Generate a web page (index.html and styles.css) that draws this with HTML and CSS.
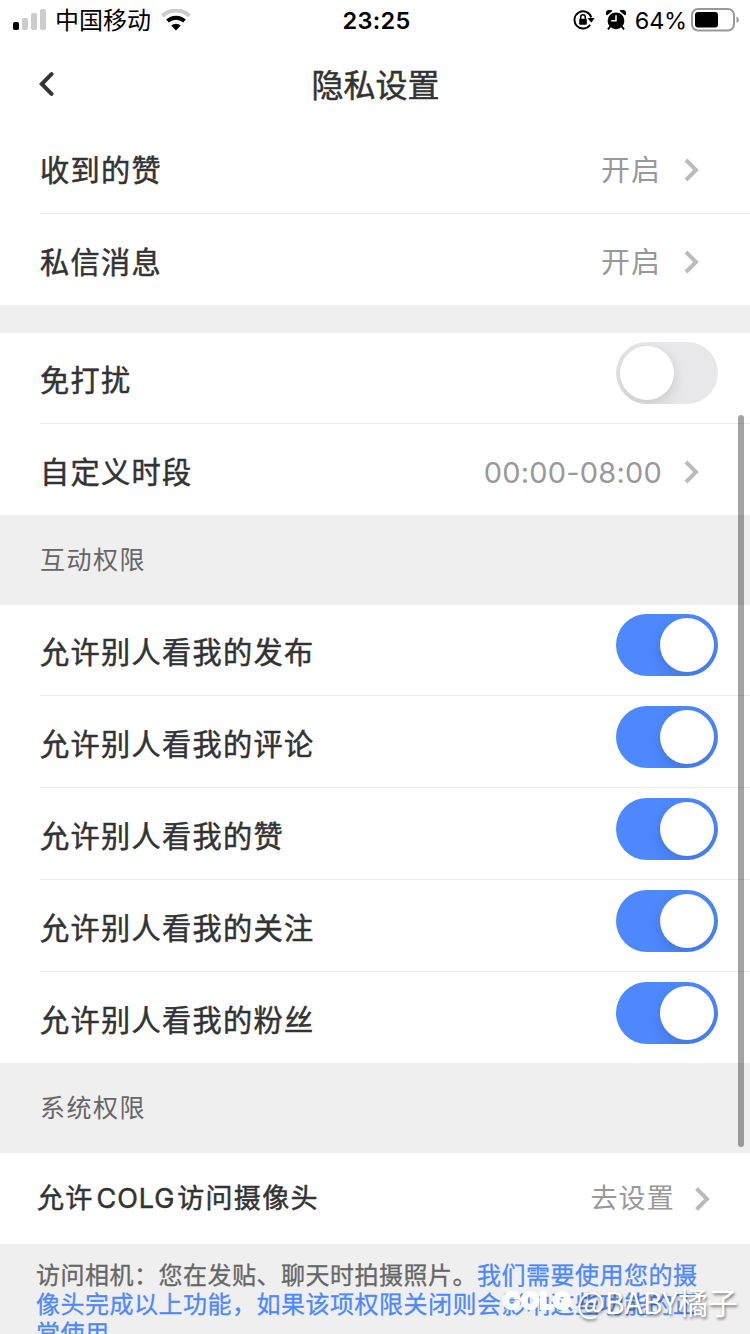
FILE: index.html
```html
<!DOCTYPE html>
<html lang="zh-CN">
<head>
    <meta charset="UTF-8">
    <meta name="viewport" content="width=device-width, initial-scale=1.0">
    <title>隐私设置</title>
    <link rel="stylesheet" href="styles.css">
</head>
<body>
    <div class="screen">
        <header class="status-bar">
            <div class="status-left">
                <svg class="signal" width="34" height="22" viewBox="0 0 34 22">
                    <rect x="0" y="13" width="6" height="8" rx="1.8" fill="#000"/>
                    <rect x="9" y="9" width="6" height="12" rx="1.8" fill="#ccc"/>
                    <rect x="18" y="4" width="6" height="17" rx="1.8" fill="#ccc"/>
                    <rect x="27" y="0" width="6" height="21" rx="1.8" fill="#ccc"/>
                </svg>
                <span class="carrier">中国移动</span>
                <svg class="wifi" width="30" height="22" viewBox="0 0 30 22">
                    <path d="M1.5 7 A19.5 19.5 0 0 1 28.5 7" fill="none" stroke="#ccc" stroke-width="4"/>
                    <path d="M6.5 12 A12.5 12.5 0 0 1 23.5 12" fill="none" stroke="#000" stroke-width="4"/>
                    <path d="M10.3 16.6 A6.8 6.8 0 0 1 19.7 16.6 L15 21.5 Z" fill="#000"/>
                </svg>
            </div>
            <span class="time">23:25</span>
            <div class="status-right">
                <svg class="lock" width="22" height="20" viewBox="0 0 22 20">
                    <path d="M17.2 14.8 A8.6 8.6 0 1 1 18.3 7.4" fill="none" stroke="#000" stroke-width="1.9"/>
                    <path d="M14.6 8 H21.6 L18.3 12.8 Z" fill="#000"/>
                    <rect x="6.2" y="8.8" width="7.6" height="6" rx="1" fill="#000"/>
                    <path d="M7.7 9 V7.2 A2.3 2.5 0 0 1 12.3 7.2 V9" fill="none" stroke="#000" stroke-width="1.5"/>
                </svg>
                <svg class="alarm" width="20" height="20" viewBox="0 0 20 20">
                    <circle cx="10" cy="10.8" r="8.4" fill="#000"/>
                    <path d="M0.8 5.6 A3.6 3.6 0 0 1 6.4 0.9 Z M13.6 0.9 A3.6 3.6 0 0 1 19.2 5.6 Z" fill="#000"/>
                    <path d="M4.2 16.5 L2 19.3 M15.8 16.5 L18 19.3" stroke="#000" stroke-width="2"/>
                    <path d="M10 5.2 V10.8 H5.2" fill="none" stroke="#fff" stroke-width="1.5"/>
                </svg>
                <span class="percent">64%</span>
                <svg class="battery" width="49" height="24" viewBox="0 0 49 24">
                    <rect x="1" y="1" width="42" height="21.5" rx="6" fill="none" stroke="#999" stroke-width="2"/>
                    <rect x="4" y="4" width="23" height="15.5" rx="3" fill="#000"/>
                    <path d="M45.5 8.5 Q47.8 9.5 47.8 11.8 Q47.8 14 45.5 15 Z" fill="#999"/>
                </svg>
            </div>
        </header>

        <nav class="nav">
            <svg class="back" width="16" height="26" viewBox="0 0 16 26">
                <path d="M12.5 3.2 L2.8 13 L12.5 22.8" fill="none" stroke="#333" stroke-width="4" stroke-linecap="round" stroke-linejoin="miter"/>
            </svg>
            <h1 class="title">隐私设置</h1>
        </nav>

        <section class="group">
            <div class="row">
                <span class="label">收到的赞</span>
                <span class="value">开启</span>
                <svg class="arrow" width="16" height="26" viewBox="0 0 16 26"><path d="M3 3 L13 13 L3 23"/></svg>
            </div>
            <div class="row">
                <span class="label">私信消息</span>
                <span class="value">开启</span>
                <svg class="arrow" width="16" height="26" viewBox="0 0 16 26"><path d="M3 3 L13 13 L3 23"/></svg>
            </div>
        </section>

        <div class="gap"></div>

        <section class="group">
            <div class="row">
                <span class="label">免打扰</span>
                <span class="switch"></span>
            </div>
            <div class="row">
                <span class="label">自定义时段</span>
                <span class="value hours">00:00-08:00</span>
                <svg class="arrow" width="16" height="26" viewBox="0 0 16 26"><path d="M3 3 L13 13 L3 23"/></svg>
            </div>
        </section>

        <h2 class="section-title">互动权限</h2>

        <section class="group">
            <div class="row">
                <span class="label">允许别人看我的发布</span>
                <span class="switch on"></span>
            </div>
            <div class="row">
                <span class="label">允许别人看我的评论</span>
                <span class="switch on"></span>
            </div>
            <div class="row">
                <span class="label">允许别人看我的赞</span>
                <span class="switch on"></span>
            </div>
            <div class="row">
                <span class="label">允许别人看我的关注</span>
                <span class="switch on"></span>
            </div>
            <div class="row">
                <span class="label">允许别人看我的粉丝</span>
                <span class="switch on"></span>
            </div>
        </section>

        <h2 class="section-title">系统权限</h2>

        <section class="group">
            <div class="row system">
                <span class="label">允许<span class="latin">COLG</span>访问摄像头</span>
                <span class="value">去设置</span>
                <svg class="arrow" width="18" height="28" viewBox="0 0 18 28"><path d="M3.5 3.5 L14 14 L3.5 24.5"/></svg>
            </div>
        </section>

        <p class="note">
            访问相机：您在发贴、聊天时拍摄照片。<span class="link">我们需要使用您的摄<br>像头完成以上功能，如果该项权限关闭则会影响这些功能的正<br>常使用</span>
        </p>

        <div class="scrollbar"></div>
        <div class="watermark">
            <span class="watermark-logo">COLG</span>
            <span class="watermark-name">@BABY橘子</span>
        </div>
    </div>
</body>
</html>
```

FILE: styles.css
```css
* {
    margin: 0;
    padding: 0;
    box-sizing: border-box;
}

body {
    font-family: Inter, "Noto Sans CJK SC", sans-serif;
    background: #fff;
    color: #333;
    overflow: hidden;
}

svg {
    display: block;
    flex: none;
}

.screen {
    position: relative;
    width: 750px;
    height: 1334px;
    overflow: hidden;
    background: #efefef;
}

/* status bar */
.status-bar {
    display: grid;
    grid-template-columns: 1fr auto 1fr;
    align-items: center;
    height: 40px;
    padding: 0 10px 0 13px;
    background: #fff;
    color: #000;
    line-height: 40px;
}

.status-left,
.status-right {
    display: flex;
    align-items: center;
}

.status-right {
    justify-content: flex-end;
}

.carrier {
    margin-left: 8px;
    padding-top: 2px;
    font-size: 24px;
    line-height: 38px;
}

.wifi {
    margin-left: 10px;
}

.time {
    padding-top: 2px;
    font-size: 23.5px;
    font-weight: 600;
    letter-spacing: 0.3px;
    line-height: 38px;
}

.alarm {
    margin: 0 9px 0 11px;
}

.percent {
    margin-right: 4px;
    padding-top: 2px;
    font-size: 23.5px;
    letter-spacing: -0.2px;
    line-height: 38px;
}

/* title */
.nav {
    display: grid;
    grid-template-columns: 1fr auto 1fr;
    align-items: center;
    height: 83px;
    padding: 6px 38px 0 39px;
    background: #fff;
}

.back {
    margin-top: -2px;
}

.title {
    padding-top: 2px;
    font-size: 32px;
    font-weight: 400;
    line-height: 48px;
    -webkit-text-stroke: 0.5px #333;
}

/* rows */
.group {
    background: #fff;
    padding-left: 40px;
}

.row {
    display: flex;
    align-items: center;
    height: 91px;
    padding: 3px 51px 0 0;
}

.row + .row {
    height: 92px;
    padding-top: 4px;
    border-top: 1px solid #ececec;
}

.row:first-child:not(:last-child) {
    height: 90px;
}

.label {
    flex: 1;
    padding-top: 3px;
    font-size: 29.2px;
    letter-spacing: 1.3px;
    line-height: 44px;
    -webkit-text-stroke: 0.5px #333;
}

.value {
    margin-right: 22px;
    padding-top: 3px;
    color: #999;
    font-size: 29px;
    letter-spacing: 1px;
    line-height: 44px;
}

.hours {
    margin-right: 21px;
    letter-spacing: 0.2px;
}

.arrow {
    fill: none;
    stroke: #bbb;
    stroke-width: 4;
}

.switch {
    width: 102px;
    height: 62px;
    margin: -14px -19px 0 0;
    padding: 4px;
    border-radius: 31px;
    background: #e8e8eb;
    overflow: hidden;
}

.row + .row .switch {
    margin-top: -13px;
}

.switch::before {
    content: "";
    display: block;
    width: 54px;
    height: 54px;
    border-radius: 50%;
    background: #fff;
    box-shadow: 0 5px 14px rgba(0, 0, 0, 0.14);
}

.switch.on {
    background: #4d88ff;
}

.switch.on::before {
    margin-left: 40px;
}

.gap {
    height: 28px;
}

.section-title {
    height: 90px;
    padding-left: 40px;
    color: #666;
    font-size: 25px;
    font-weight: 400;
    letter-spacing: 1.5px;
    line-height: 91px;
}

.system {
    margin-left: -3px;
    padding: 0 39px 0 0;
}

.system .label {
    padding-top: 1px;
    font-size: 27px;
    letter-spacing: 1.3px;
}

.latin {
    margin: 0 2px 0 3px;
    letter-spacing: 0.9px;
}

.system .value {
    margin-right: 18px;
    padding-top: 1px;
    font-size: 27px;
    letter-spacing: 1.2px;
}

/* permission note */
.note {
    padding: 17px 36px 0;
    color: #666;
    font-size: 24px;
    letter-spacing: 0.5px;
    line-height: 29px;
    white-space: nowrap;
    -webkit-text-stroke: 0.3px;
}

.link {
    color: #4d88ff;
}

/* overlays */
.scrollbar {
    position: absolute;
    top: 415px;
    left: 738px;
    width: 6px;
    height: 732px;
    border-radius: 3px;
    background: rgba(0, 0, 0, 0.36);
}

.watermark {
    position: absolute;
    right: 12px;
    bottom: 11px;
    display: flex;
    align-items: center;
    color: #fff;
    line-height: 44px;
    white-space: nowrap;
    text-shadow: 1px 2px 3px rgba(0, 0, 0, 0.5);
}

.watermark-logo {
    margin-right: 5px;
    font-size: 23px;
    font-weight: 900;
    letter-spacing: 1px;
    -webkit-text-stroke: 2px #fff;
    text-shadow: none;
}

.watermark-name {
    font-family: "Noto Sans CJK SC", sans-serif;
    font-size: 30px;
}
```
